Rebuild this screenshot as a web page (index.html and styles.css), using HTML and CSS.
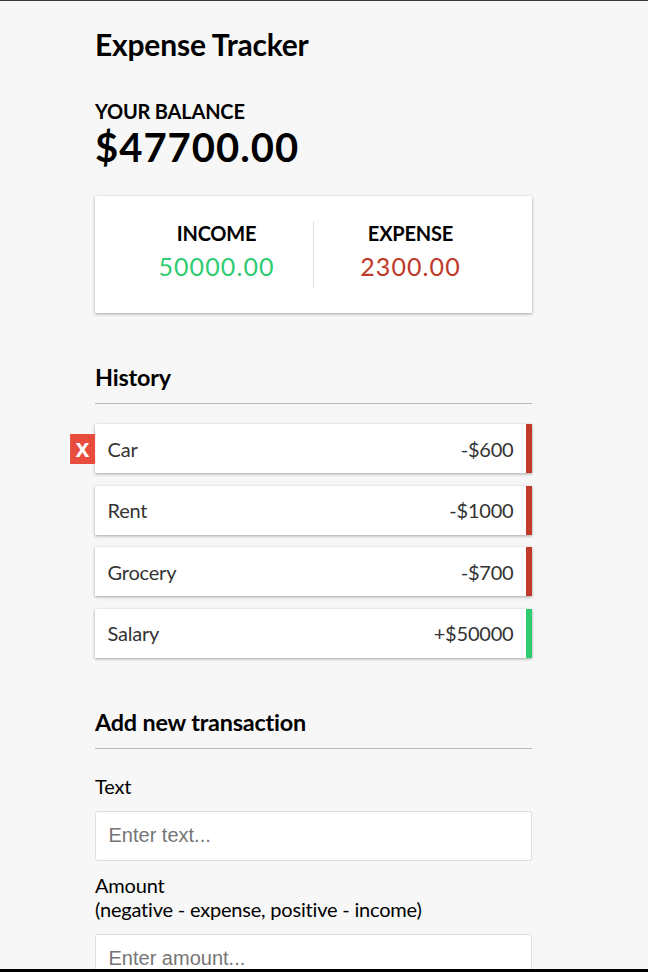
FILE: index.html
```html
<!DOCTYPE html>
<html lang="en">
<head>
<meta charset="UTF-8">
<title>Expense Tracker</title>
<link rel="stylesheet" href="styles.css">
</head>
<body>
<div class="frame"></div>
<main class="container">
  <h2 class="title">Expense Tracker</h2>
  <section class="balance">
    <h4 class="caps">Your Balance</h4>
    <h1 class="balance-amount">$47700.00</h1>
  </section>
  <div class="inc-exp">
    <div class="inc-exp-col inc-exp-col--first">
      <h4 class="caps">Income</h4>
      <p class="money money--plus">50000.00</p>
    </div>
    <div class="inc-exp-col">
      <h4 class="caps">Expense</h4>
      <p class="money money--minus">2300.00</p>
    </div>
  </div>
  <h3 class="section-title">History</h3>
  <ul class="list">
    <li class="item item--minus">Car <span>-$600</span><button class="delete-btn">x</button></li>
    <li class="item item--minus">Rent <span>-$1000</span></li>
    <li class="item item--minus">Grocery <span>-$700</span></li>
    <li class="item item--plus">Salary <span>+$50000</span></li>
  </ul>
  <h3 class="section-title">Add new transaction</h3>
  <form class="form">
    <div class="form-control">
      <label class="field-label" for="text">Text</label>
      <input class="field-input" type="text" id="text" placeholder="Enter text...">
    </div>
    <div class="form-control">
      <label class="field-label" for="amount">Amount <br>(negative - expense, positive - income)</label>
      <input class="field-input" type="number" id="amount" placeholder="Enter amount...">
    </div>
    <button class="btn" type="button">Add transaction</button>
  </form>
</main>
</body>
</html>
```
FILE: styles.css
```css
* {
  box-sizing: border-box;
}

body {
  margin: 0;
  padding: 0 21px 0 0;
  background-color: #f7f7f7;
  font-family: Lato, "Liberation Sans", sans-serif;
  font-size: 20px;
  letter-spacing: -0.01em;
}

.frame {
  position: fixed;
  top: 0;
  left: 0;
  right: 0;
  bottom: 0;
  border-top: 1px solid #3d3333;
  border-bottom: 3px solid #000;
  pointer-events: none;
  z-index: 10;
}

.container {
  width: 437px;
  margin: 0 auto;
  padding-top: 25.5px;
}

.title {
  font-size: 30px;
  margin: 0 0 37.5px;
}

.caps {
  margin: 0;
  font-size: 20px;
  text-transform: uppercase;
}

.balance-amount {
  margin: 0;
  font-size: 40px;
  letter-spacing: 1px;
}

.inc-exp {
  background-color: #fff;
  box-shadow: 0 1.25px 3.75px rgba(0, 0, 0, 0.12), 0 1.25px 2.5px rgba(0, 0, 0, 0.24);
  padding: 25px;
  display: flex;
  justify-content: space-between;
  margin: 25px 0;
}

.inc-exp-col {
  flex: 1;
  text-align: center;
}

.inc-exp-col--first {
  border-right: 1.25px solid #dedede;
}

.money {
  font-size: 25px;
  letter-spacing: 1.1px;
  margin: 6.25px 0;
}

.money--plus {
  color: #2ecc71;
}

.money--minus {
  color: #c0392b;
}

.section-title {
  font-size: 23.4px;
  border-bottom: 1.25px solid #bbb;
  padding-bottom: 12.5px;
  margin: 50px 0 12.5px;
}

.list {
  list-style-type: none;
  padding: 0;
  margin: 20px 0 50px;
}

.item {
  background-color: #fff;
  box-shadow: 0 1.25px 3.75px rgba(0, 0, 0, 0.12), 0 1.25px 2.5px rgba(0, 0, 0, 0.24);
  color: #333;
  display: flex;
  justify-content: space-between;
  position: relative;
  padding: 12.5px;
  margin: 12.5px 0;
}

.item--plus {
  border-right: 6.25px solid #2ecc71;
}

.item--minus {
  border-right: 6.25px solid #c0392b;
}

.delete-btn {
  background-color: #e74c3c;
  border: 0;
  color: #fff;
  font-family: "Liberation Sans", Arial, sans-serif;
  font-weight: bold;
  letter-spacing: 0;
  font-size: 25px;
  line-height: 25px;
  padding: 2.5px 5.5px;
  position: absolute;
  top: 50%;
  left: 0;
  transform: translate(-100%, -50%);
}

.field-label {
  display: inline-block;
  margin: 12.5px 0;
}

.field-input {
  border: 1.25px solid #dedede;
  border-radius: 2.5px;
  display: block;
  font-family: "Liberation Sans", Arial, sans-serif;
  letter-spacing: 0;
  font-size: 20px;
  padding: 12.5px;
  width: 100%;
  background: #fff;
}

.btn {
  background-color: #9c88ff;
  box-shadow: 0 1.25px 3.75px rgba(0, 0, 0, 0.12), 0 1.25px 2.5px rgba(0, 0, 0, 0.24);
  color: #fff;
  border: 0;
  display: block;
  font-size: 20px;
  margin: 12.5px 0 37.5px;
  padding: 12.5px;
  width: 100%;
}
```
